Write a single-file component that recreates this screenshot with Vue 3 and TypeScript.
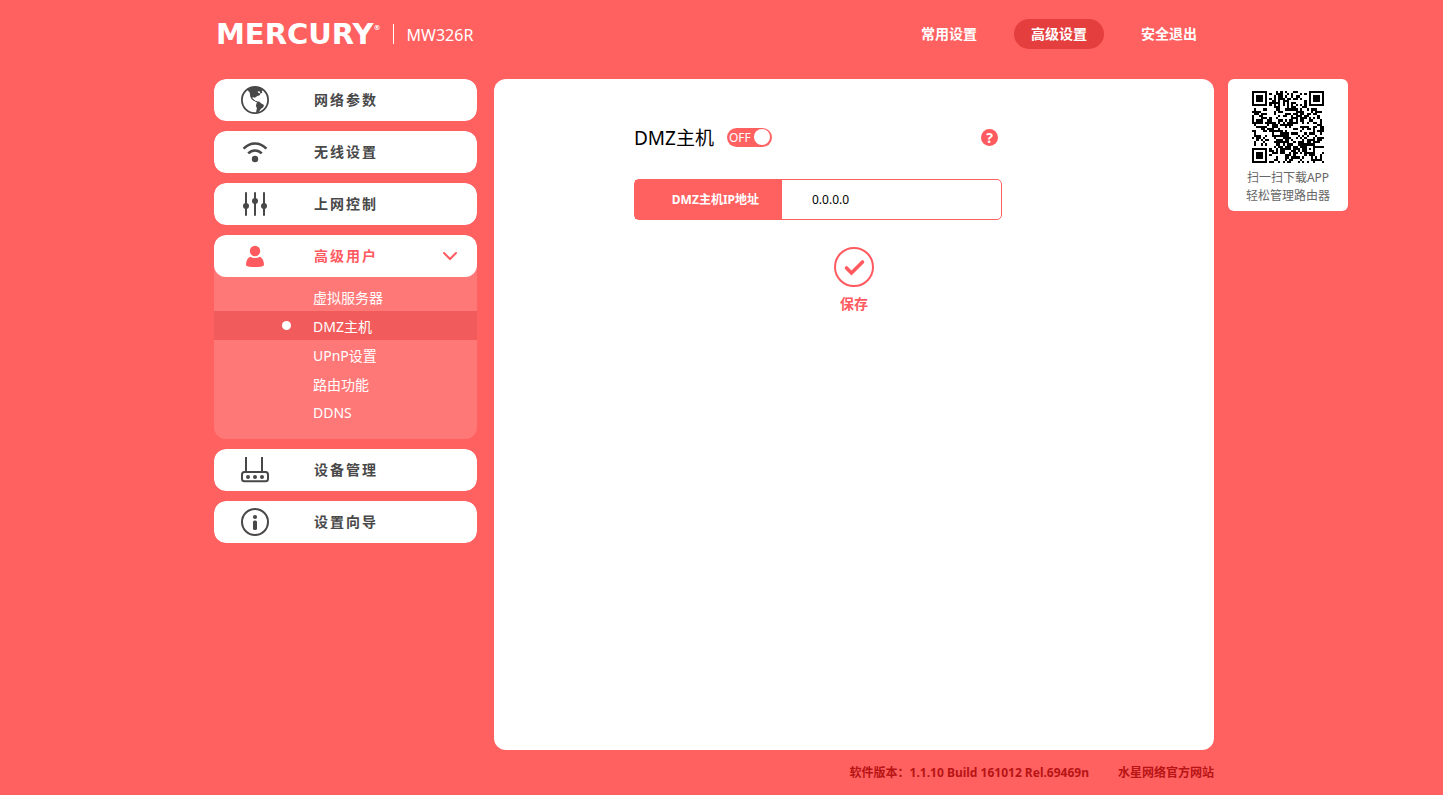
<script setup lang="ts">
import { ref } from 'vue'

type IconName = 'globe' | 'wifi' | 'sliders' | 'user' | 'router' | 'info'

interface MenuEntry {
  label: string
  icon: IconName
  children?: string[]
}

const model = 'MW326R'
const tabs = ['常用设置', '高级设置', '安全退出']
const activeTab = ref('高级设置')

const menu: MenuEntry[] = [
  { label: '网络参数', icon: 'globe' },
  { label: '无线设置', icon: 'wifi' },
  { label: '上网控制', icon: 'sliders' },
  { label: '高级用户', icon: 'user', children: ['虚拟服务器', 'DMZ主机', 'UPnP设置', '路由功能', 'DDNS'] },
  { label: '设备管理', icon: 'router' },
  { label: '设置向导', icon: 'info' },
]
const activeChild = ref('DMZ主机')

const dmzEnabled = ref(false)
const dmzIp = ref('0.0.0.0')

const QR_SIZE = 33

function finderModule(r: number, c: number): boolean {
  const d = Math.max(Math.abs(r - 3), Math.abs(c - 3))
  return d !== 2 && d <= 3
}

function buildQr(): string {
  let seed = 20161
  let path = ''
  for (let r = 0; r < QR_SIZE; r++) {
    for (let c = 0; c < QR_SIZE; c++) {
      seed = (seed * 1103515245 + 12345) % 2147483648
      let on = (seed >> 12) % 100 < 50
      const top = r < 8
      const left = c < 8
      if (top && left) on = finderModule(r, c)
      else if (top && c >= QR_SIZE - 8) on = finderModule(r, QR_SIZE - 1 - c)
      else if (left && r >= QR_SIZE - 8) on = finderModule(QR_SIZE - 1 - r, c)
      else if (r === 6) on = c % 2 === 0
      else if (c === 6) on = r % 2 === 0
      else if (Math.abs(r - 26) <= 2 && Math.abs(c - 26) <= 2) {
        on = Math.max(Math.abs(r - 26), Math.abs(c - 26)) !== 1
      }
      if (on) path += `M${c} ${r}h1v1h-1z`
    }
  }
  return path
}

const qrPath = buildQr()
</script>

<template>
  <div class="page">
    <header class="top">
      <div class="brand">
        <span class="logo">MERCURY<sup class="reg">®</sup></span>
        <span class="model">{{ model }}</span>
      </div>
      <nav class="tabs">
        <button
          v-for="tab in tabs"
          :key="tab"
          type="button"
          class="tab"
          :class="{ active: tab === activeTab }"
          @click="activeTab = tab"
        >{{ tab }}</button>
      </nav>
    </header>

    <div class="body">
      <nav class="menu">
        <div v-for="item in menu" :key="item.label" class="group" :class="{ open: item.children }">
          <button type="button" class="entry">
            <svg class="icon" viewBox="0 0 28 28" aria-hidden="true">
              <template v-if="item.icon === 'globe'">
                <circle cx="14" cy="14" r="13.1" fill="none" stroke="currentColor" stroke-width="1.8" />
                <path fill="currentColor" d="M7.5 2.5C11 .8 17 .5 20.5 2.6L22 4.500l-1.200.300.400 2.200-1.700.600-1-2.400-2 .2 1 1.6 2 .6-.8 1.700-2.400.800-2 1.400-1.400.2-.6-.8-1 .8.8 1.500 2 1.200-.6.600-2.700-1.400-1.600-3.200-.5-4-2.400-2.3z" />
                <path fill="none" stroke="currentColor" stroke-width="1" d="M12 13.500l2.500 1.800 1.800.300" />
                <path fill="currentColor" d="M16 15.800l2.200-.400 1.800 1.800 3 1.900-.7 2.200-2.500 1.800-1.400 2.200-1.800 1.500-1.600-.300.900-4.200-1-2.600z" />
              </template>
              <template v-else-if="item.icon === 'wifi'">
                <g fill="none" stroke="currentColor" stroke-width="2.5">
                  <path d="M2.6 10.6C9 3.7 19 3.7 25.4 10.6" />
                  <path d="M7.2 15.4C11 11.4 17 11.4 20.8 15.4" />
                </g>
                <circle cx="14" cy="21" r="3.2" fill="currentColor" />
              </template>
              <template v-else-if="item.icon === 'sliders'">
                <path stroke="currentColor" stroke-width="2" stroke-linecap="round" d="M5 3v22M14 3v22M23 3v22" />
                <g fill="currentColor">
                  <circle cx="5" cy="16" r="3" /><circle cx="14" cy="11" r="3" /><circle cx="23" cy="16" r="3" />
                </g>
              </template>
              <template v-else-if="item.icon === 'user'">
                <circle cx="14" cy="9" r="5.2" fill="currentColor" />
                <path fill="currentColor" d="M9 14.8q5 2.6 10 0c2.8 1.6 4 4.6 4 8.2q0 1-2 1.4-7 1-14 0-2-.4-2-1.4c0-3.600 1.200-6.600 4-8.200z" />
              </template>
              <template v-else-if="item.icon === 'router'">
                <rect x="1" y="16" width="26" height="9.200" rx="2.500" fill="none" stroke="currentColor" stroke-width="2" />
                <path fill="none" stroke="currentColor" stroke-width="2" d="M5 1v15M21 1v15" />
                <g fill="currentColor">
                  <circle cx="7" cy="21" r="2" /><circle cx="14" cy="21" r="2" /><circle cx="21" cy="21" r="2" />
                </g>
              </template>
              <template v-else>
                <circle cx="14" cy="14" r="13" fill="none" stroke="currentColor" stroke-width="2" />
                <circle cx="14" cy="9" r="2.100" fill="currentColor" />
                <rect x="12" y="12.500" width="4" height="9.500" rx="1.500" fill="currentColor" />
              </template>
            </svg>
            <span class="label">{{ item.label }}</span>
            <svg v-if="item.children" class="chevron" viewBox="0 0 16 10" aria-hidden="true">
              <path d="M2 2l6 6 6-6" fill="none" stroke="currentColor" stroke-width="2" stroke-linecap="round" />
            </svg>
          </button>
          <ul v-if="item.children" class="sub">
            <li v-for="child in item.children" :key="child">
              <a
                href="#"
                class="sublink"
                :class="{ active: child === activeChild }"
                @click.prevent="activeChild = child"
              ><span class="dot"></span>{{ child }}</a>
            </li>
          </ul>
        </div>
      </nav>

      <main class="panel">
        <form class="form" @submit.prevent>
          <div class="heading">
            <h1 class="title">DMZ主机</h1>
            <button
              type="button"
              role="switch"
              class="switch"
              :class="{ on: dmzEnabled }"
              :aria-checked="dmzEnabled"
              aria-label="DMZ主机"
              @click="dmzEnabled = !dmzEnabled"
            ><span>{{ dmzEnabled ? 'ON' : 'OFF' }}</span><i class="knob"></i></button>
            <button type="button" class="help">?</button>
          </div>
          <div class="field">
            <label class="field-label" for="dmz-ip">DMZ主机IP地址</label>
            <input id="dmz-ip" v-model="dmzIp" class="field-input" type="text" />
          </div>
          <button type="submit" class="save">
            <svg class="tick" viewBox="0 0 40 40" aria-hidden="true">
              <circle cx="20" cy="20" r="19" fill="none" stroke="currentColor" stroke-width="2" />
              <path d="M12.500 21l5 5L28.500 15" fill="none" stroke="currentColor" stroke-width="3.600" stroke-linecap="round" />
            </svg>
            <span>保存</span>
          </button>
        </form>
      </main>

      <aside class="app">
        <svg class="qr" viewBox="0 0 33 33" shape-rendering="crispEdges" role="img">
          <path :d="qrPath" fill="#000" />
        </svg>
        <span>扫一扫下载APP</span>
        <span>轻松管理路由器</span>
      </aside>
    </div>

    <footer class="foot">
      <span>软件版本：1.1.10 Build 161012 Rel.69469n</span>
      <a href="#" class="site">水星网络官方网站</a>
    </footer>
  </div>
</template>

<style>
body {
  margin: 0;
  background: #fff;
}
</style>

<style scoped>
.page {
  box-sizing: border-box;
  min-height: calc(100vh - 4px);
  padding-right: 15px;
  display: flex;
  flex-direction: column;
  align-items: center;
  background: #ff6161;
  color: #fff;
  font-family: "Noto Sans", "Noto Sans CJK SC", sans-serif;
  font-size: 14px;
}

button,
input {
  font-family: inherit;
  border: 0;
  margin: 0;
  padding: 0;
  background: none;
  color: inherit;
}

button {
  cursor: pointer;
}

a {
  text-decoration: none;
  color: inherit;
}

.top,
.body,
.foot {
  width: 100%;
  max-width: 1000px;
}

.top {
  display: flex;
  justify-content: space-between;
  padding: 19px 0 30px;
}

.brand {
  display: flex;
  align-items: center;
  padding-left: 2px;
  height: 30px;
}

.logo {
  display: flex;
  font-family: "DejaVu Sans", sans-serif;
  font-weight: bold;
  font-size: 29px;
  line-height: 30px;
}

.reg {
  font-size: 7px;
  line-height: 18px;
}

.model {
  margin-left: 12px;
  padding: 2px 0 0 13px;
  border-left: 1px solid #fff;
  font-size: 16px;
  line-height: 18px;
}

.tabs {
  display: flex;
  gap: 20px;
}

.tab {
  width: 90px;
  height: 30px;
  padding-bottom: 2px;
  border-radius: 15px;
  font-size: 14px;
  font-weight: bold;
}

.tab.active {
  background: #e43e3e;
}

.body {
  display: flex;
  flex: 1;
}

.menu {
  flex: 0 0 263px;
  margin-right: 17px;
  display: flex;
  flex-direction: column;
  gap: 10px;
}

.group {
  border-radius: 12px;
  overflow: hidden;
}

.group.open {
  background: #ff7878;
}

.entry {
  box-sizing: border-box;
  display: flex;
  align-items: center;
  width: 100%;
  height: 42px;
  padding: 0 19px 0 27px;
  border-radius: 12px;
  background: #fff;
  color: #484848;
}

.open .entry {
  color: #ff5a5f;
}

.icon {
  width: 28px;
  height: 28px;
  margin-right: 45px;
}

.label {
  flex: 1;
  padding-bottom: 2px;
  text-align: left;
  font-size: 14px;
  font-weight: bold;
  letter-spacing: 2px;
}

.chevron {
  width: 16px;
  height: 10px;
}

.sub {
  list-style: none;
  margin: 0;
  padding: 5px 0 12px;
}

.sublink {
  display: flex;
  align-items: center;
  height: 29px;
  padding-left: 68px;
}

.sublink.active {
  background: #f15b5b;
}

.dot {
  width: 9px;
  height: 9px;
  margin-right: 22px;
  border-radius: 50%;
}

.active .dot {
  background: #fff;
}

.panel {
  flex: 1;
  border-radius: 12px;
  background: #fff;
}

.form {
  display: flex;
  flex-direction: column;
  padding: 44px 140px;
}

.heading {
  display: flex;
  align-items: center;
  width: 364px;
  height: 28px;
}

.title {
  margin: 0;
  color: #000;
  font-size: 19px;
  font-weight: normal;
}

.switch {
  box-sizing: border-box;
  display: flex;
  align-items: center;
  justify-content: space-between;
  width: 45px;
  height: 19px;
  margin-left: 13px;
  padding: 0 2px;
  border-radius: 10px;
  background: #ff6161;
  font-size: 12px;
}

.switch.on {
  flex-direction: row-reverse;
}

.knob {
  width: 16px;
  height: 16px;
  border-radius: 50%;
  background: #fff;
}

.help {
  width: 17px;
  height: 17px;
  margin-left: auto;
  border-radius: 50%;
  background: #ff5a5f;
  font-size: 14px;
  font-weight: bold;
  line-height: 17px;
}

.field {
  box-sizing: border-box;
  display: flex;
  width: 368px;
  height: 41px;
  margin-top: 28px;
  border: 1px solid #ff6161;
  border-radius: 5px;
}

.field-label {
  flex: 0 0 124px;
  padding-right: 23px;
  background: #ff6161;
  font-size: 12px;
  font-weight: bold;
  line-height: 39px;
  text-align: right;
}

.field-input {
  flex: 1;
  min-width: 0;
  padding-left: 30px;
  color: #000;
  font-size: 12px;
  outline: none;
}

.save {
  display: flex;
  flex-direction: column;
  align-items: center;
  align-self: center;
  gap: 6px;
  margin-top: 27px;
  color: #ff5a5f;
  font-size: 14px;
  font-weight: bold;
}

.tick {
  width: 40px;
  height: 40px;
}

.app {
  box-sizing: border-box;
  flex: 0 0 120px;
  align-self: flex-start;
  display: flex;
  flex-direction: column;
  align-items: center;
  margin: 0 -134px 0 14px;
  padding: 12px 0 6px;
  border-radius: 6px;
  background: #fff;
  color: #666;
  font-size: 12px;
  line-height: 18px;
}

.qr {
  width: 72px;
  height: 72px;
  margin-bottom: 6px;
}

.foot {
  display: flex;
  justify-content: flex-end;
  gap: 29px;
  height: 45px;
  color: #b81414;
  font-size: 12px;
  font-weight: bold;
  line-height: 45px;
}
</style>
